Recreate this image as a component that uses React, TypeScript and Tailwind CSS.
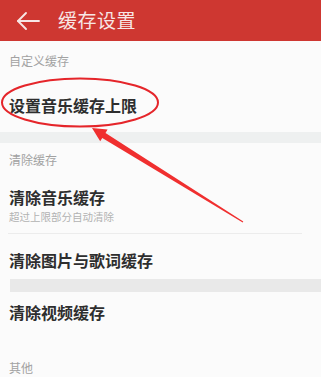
const FONT = { fontFamily: '"Noto Sans CJK SC", "Noto Sans", sans-serif' }

function BackArrow() {
  return (
    <svg width="24" height="20" viewBox="0 0 24 20" fill="none" stroke="currentColor" strokeWidth="1.9" strokeLinecap="round" strokeLinejoin="round">
      <path d="M2 10 H23" />
      <path d="M10 2 L2 10 L10 18" />
    </svg>
  )
}

function SectionLabel({ text, className = '' }: { text: string; className?: string }) {
  return (
    <div className={`flex items-center pl-[9px] text-[12px] leading-[16px] text-[#a2a2a2] ${className}`}>
      {text}
    </div>
  )
}

function Annotation() {
  return (
    <svg className="pointer-events-none absolute left-0 top-0" width="321" height="377" viewBox="0 0 321 377">
      <ellipse cx="80" cy="102.5" rx="78" ry="24" fill="none" stroke="#e5252a" strokeWidth="2" />
      <polygon
        points="92,128 100.2,141.3 102.3,137.9 242.7,222.4 243.3,221.6 105.5,132.9 107.6,129.5"
        fill="#f02f2f"
      />
    </svg>
  )
}

export default function App() {
  return (
    <div className="relative h-[377px] w-[321px] overflow-hidden bg-[#fbfbfb]" style={FONT}>
      <div className="flex h-[41px] items-center bg-[#ce3731] text-[#f7e6e5]">
        <div className="ml-[16px] flex items-center">
          <BackArrow />
        </div>
        <div className="ml-[18px] text-[19px] leading-[24px] tracking-[0.5px] -mt-[1px]">缓存设置</div>
      </div>

      <SectionLabel text="自定义缓存" className="h-[40px]" />

      <div className="flex h-[51px] items-center pb-[4px] pl-[9px] text-[16px] font-bold leading-[20px] text-[#2e2e2e]">
        设置音乐缓存上限
      </div>

      <div className="h-[11px] bg-[#eef0f0]" />

      <SectionLabel text="清除缓存" className="h-[34px]" />

      <div className="flex h-[56px] flex-col justify-center pl-[9px]">
        <div className="text-[16px] font-bold leading-[23px] text-[#2e2e2e]">清除音乐缓存</div>
        <div className="text-[10.5px] leading-[15px] text-[#b2b2b2]">超过上限部分自动清除</div>
      </div>

      <div className="ml-[8px] mr-[19px] h-px bg-[#ececec]" />

      <div className="flex h-[45px] items-center pt-[7px] pl-[9px] text-[16px] font-bold leading-[20px] text-[#2e2e2e]">
        清除图片与歌词缓存
      </div>

      <div className="ml-[10px] h-[13px] bg-[#e9e9e9]" />

      <div className="flex h-[40px] items-center pl-[9px] text-[16px] font-bold leading-[20px] text-[#2e2e2e]">
        清除视频缓存
      </div>

      <SectionLabel text="其他" className="pt-[28px]" />

      <Annotation />
    </div>
  )
}
